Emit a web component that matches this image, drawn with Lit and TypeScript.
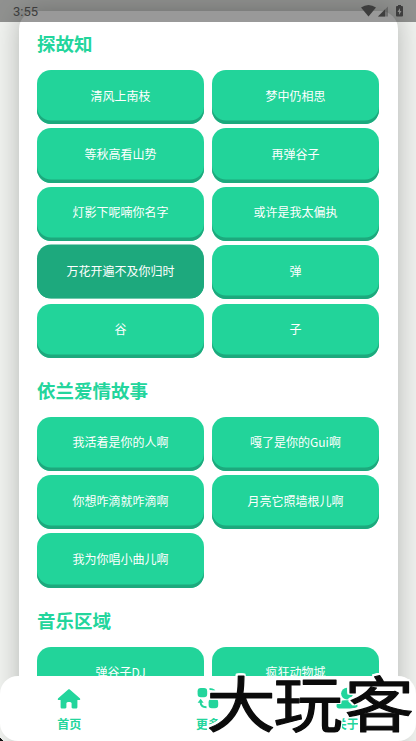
import { LitElement, html, css, svg } from "lit";
import { customElement } from "lit/decorators.js";
import { classMap } from "lit/directives/class-map.js";

interface Group { title: string; items: string[]; }

const groups: Group[] = [
  { title: "探故知", items: ["清风上南枝", "梦中仍相思", "等秋高看山势", "再弹谷子", "灯影下呢喃你名字", "或许是我太偏执", "万花开遍不及你归时", "弹", "谷", "子"] },
  { title: "依兰爱情故事", items: ["我活着是你的人啊", "嘎了是你的Gui啊", "你想咋滴就咋滴啊", "月亮它照墙根儿啊", "我为你唱小曲儿啊"] },
  { title: "音乐区域", items: ["弹谷子DJ", "疯狂动物城"] },
];
const pressed = "万花开遍不及你归时";

const home = svg`<path d="M11.200 1.600 1.200 10.200c-.9.8-.4 1.900.7 1.900h1.700v6.800c0 1 .6 1.600 1.600 1.600h3c.7 0 1.200-.5 1.200-1.200v-4c0-1.900 5.200-1.900 5.200 0v4c0 .7.5 1.200 1.200 1.200h3c1 0 1.600-.6 1.600-1.600v-6.800h1.700c1.100 0 1.600-1.100.7-1.900L12.800 1.600c-.5-.4-1.100-.4-1.600 0z"/>`;
const more = svg`<rect x="1.600" y="0" width="9.600" height="9.300" rx="3.200"/><rect x="12.600" y="11" width="9.600" height="9.300" rx="3.200"/>
  <path d="M13.500 1c3.700 0 5.800 1.800 6 5.500" class="line"/><path d="M16.300 5.200h6l-2.900 4z"/>
  <path d="M10.500 19.200c-3.700 0-5.800-1.800-6-5.500" class="line"/><path d="M1.600 14.800h6l-3-4z"/>`;
const about = svg`<circle cx="12" cy="5.600" r="5.900"/><path d="M1.500 18c0-4.200 3.600-5.700 10.500-5.700S22.500 13.800 22.500 18c0 1.600-1 2.400-2.600 2.400H4.100c-1.600 0-2.600-.8-2.600-2.400z"/>`;
const tabs = [{ label: "首页", icon: home }, { label: "更多", icon: more }, { label: "关于", icon: about }];

@customElement("app-root")
export class AppRoot extends LitElement {
  static styles = css`
    :host {
      display: block; position: relative; height: 741px; overflow: hidden;
      background: #f0f2ef; font-family: "Noto Sans CJK SC", sans-serif;
    }
    .status {
      position: absolute; inset: 0 0 auto; height: 22px; z-index: 3;
      box-sizing: border-box; padding: 0 13px; display: flex; justify-content: space-between;
      background: rgba(0, 0, 0, .4); color: #3d3d3d; font: 400 13px/24px Roboto, sans-serif;
    }
    .signals { display: block; width: 44px; height: 22px; margin-right: -2px; }
    .card {
      box-sizing: border-box; margin: 11px 18.500px 0; height: 800px; padding: 18px 18.500px 0;
      border-radius: 18px; background: #fff; box-shadow: 0 0 26px rgba(0, 0, 0, .25);
    }
    h2 { margin: 0 0 13px; height: 28px; font-size: 18.500px; line-height: 28px; font-weight: 700; color: #23d59c; }
    .grid { display: grid; grid-template-columns: 1fr 1fr; gap: 4.250px 8px; margin-bottom: 18px; }
    button {
      box-sizing: border-box; height: 54.150px; padding: 0 0 3px; border: 0; border-radius: 14px;
      background: #22d49a; box-shadow: inset 0 -3.500px #1da97d; color: #fff;
      font: 400 12px/18px "Noto Sans CJK SC", sans-serif;
    }
    .pressed { background: #1da97d; transform: translateY(-.5px); }
    nav {
      position: absolute; inset: auto 0 0; height: 65px; z-index: 2; border-radius: 18px;
      background: #fff; display: grid; grid-template-columns: repeat(3, 1fr); color: #23d59c;
    }
    .tab { display: flex; flex-direction: column; align-items: center; padding-top: 12px; font-size: 12px; font-weight: 700; line-height: 18px; }
    .tab svg { width: 24px; height: 24px; margin-bottom: 3px; fill: currentColor; overflow: visible; }
    .line { fill: none; stroke: currentColor; stroke-width: 2; }
    .corner { position: absolute; left: 0; bottom: 0; width: 4px; height: 4px; background: linear-gradient(45deg, #111 45%, transparent 50%); }
    .mark {
      position: absolute; left: 200px; top: 664px; width: 216px; height: 77px; z-index: 4; pointer-events: none;
      filter: drop-shadow(1.500px 0 0 #fff) drop-shadow(-1.500px 0 0 #fff) drop-shadow(0 1.500px 0 #fff) drop-shadow(0 -1.500px 0 #fff);
    }
    .mark text {
      font-family: "Noto Sans CJK SC", sans-serif; font-size: 64px; font-weight: 400;
      fill: #0b0b0b; stroke: #0b0b0b; stroke-width: 1.200px; stroke-linejoin: round;
    }
  `;

  render() {
    return html`
      <div class="status"><span>3:55</span>
        <svg class="signals" viewBox="0 0 44 22" fill="#3d3d3d">
          <path d="M0 7.500Q7.500 2.500 15 7.500L7.500 16.500z"/>
          <path d="M17 16.500 27 6.500v10z" opacity=".45"/><path d="M17 16.500 24 9.500v7z"/>
          <path fill-rule="evenodd" d="M36 6h1V5h3v1h1q1 0 1 1v8.500q0 1-1 1h-5q-1 0-1-1V7q0-1 1-1zm3 2-2.500 4H38v3l2.500-4H39z"/>
        </svg>
      </div>
      <main class="card">
        ${groups.map((g) => html`<h2>${g.title}</h2>
          <div class="grid">${g.items.map((t) => html`<button class=${classMap({ pressed: t === pressed })}>${t}</button>`)}</div>`)}
      </main>
      <nav>${tabs.map((t) => html`<div class="tab"><svg viewBox="0 0 24 24">${t.icon}</svg><span>${t.label}</span></div>`)}<i class="corner"></i></nav>
      <svg class="mark" viewBox="0 0 216 77">
        <text transform="translate(0 63) scale(1.080 .94)" x="6 68 134" y="0">大玩客</text>
      </svg>`;
  }
}
